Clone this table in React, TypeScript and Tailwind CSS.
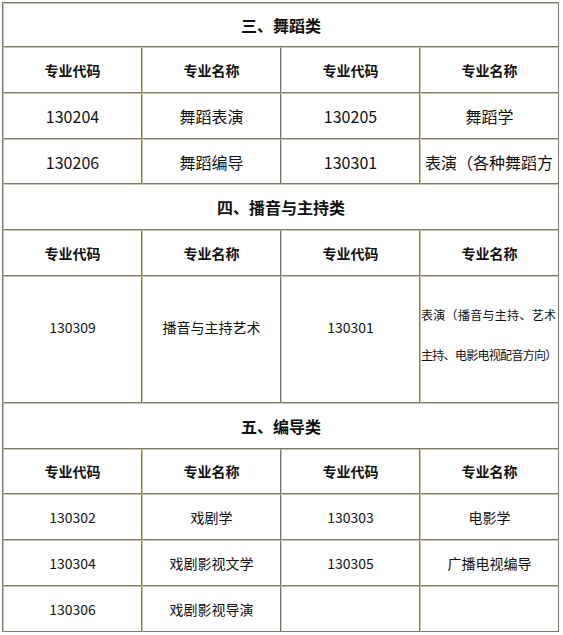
import React from "react";

type Row = { cells: string[]; h: string };

const cellBase =
  "flex items-center justify-center border-t border-l border-b border-r border-t-[#cdc6a6] border-l-[#cdc6a6] border-b-[#7b796e] border-r-[#7b796e] text-[#111]";

const Title: React.FC<{ text: string; h: string }> = ({ text, h }) => (
  <div className={`${cellBase} col-span-4 ${h} font-bold text-[16px]`}>{text}</div>
);

const Header: React.FC<{ h: string }> = ({ h }) => (
  <>
    {["专业代码", "专业名称", "专业代码", "专业名称"].map((t, i) => (
      <div key={i} className={`${cellBase} ${h} font-bold text-[14px]`}>
        {t}
      </div>
    ))}
  </>
);

const DataRow: React.FC<{ row: Row; size: string }> = ({ row, size }) => (
  <>
    {row.cells.map((t, i) => (
      <div key={i} className={`${cellBase} ${row.h} ${size} whitespace-nowrap overflow-hidden`}>
        {t}
      </div>
    ))}
  </>
);

export default function App() {
  return (
    <div
      className="w-[563px] h-[635px] bg-white pl-[2px] pt-[2px]"
      style={{ fontFamily: '"Noto Sans CJK SC", "Noto Sans", sans-serif' }}
    >
      <div className="grid grid-cols-[repeat(4,139px)] border-t border-l border-[#7b796e] w-[557px]">
        <Title text="三、舞蹈类" h="h-[44px]" />
        <Header h="h-[46px]" />
        <DataRow row={{ cells: ["130204", "舞蹈表演", "130205", "舞蹈学"], h: "h-[46px]" }} size="text-[16px]" />
        <div className={`${cellBase} h-[45px] text-[16px]`}>130206</div>
        <div className={`${cellBase} h-[45px] text-[16px]`}>舞蹈编导</div>
        <div className={`${cellBase} h-[45px] text-[16px]`}>130301</div>
        <div className={`${cellBase} h-[45px] text-[16px] !justify-start pl-[4px] whitespace-nowrap overflow-hidden`}>
          表演（各种舞蹈方
        </div>

        <Title text="四、播音与主持类" h="h-[46px]" />
        <Header h="h-[46px]" />
        <div className={`${cellBase} h-[127px] text-[14px] pb-[24px]`}>130309</div>
        <div className={`${cellBase} h-[127px] text-[14px] pb-[24px]`}>播音与主持艺术</div>
        <div className={`${cellBase} h-[127px] text-[14px] pb-[24px]`}>130301</div>
        <div className={`${cellBase} h-[127px] !justify-start overflow-hidden pb-[10px]`}>
          <div className="text-[12px] leading-[40px] whitespace-nowrap">
            <div className="tracking-[0.3px]">表演（播音与主持、艺术</div>
            <div className="tracking-[-0.7px]">主持、电影电视配音方向）</div>
          </div>
        </div>

        <Title text="五、编导类" h="h-[46px]" />
        <Header h="h-[45px]" />
        <DataRow row={{ cells: ["130302", "戏剧学", "130303", "电影学"], h: "h-[46px]" }} size="text-[14px]" />
        <DataRow row={{ cells: ["130304", "戏剧影视文学", "130305", "广播电视编导"], h: "h-[46px]" }} size="text-[14px]" />
        <DataRow row={{ cells: ["130306", "戏剧影视导演", "", ""], h: "h-[46px]" }} size="text-[14px]" />
      </div>
    </div>
  );
}
